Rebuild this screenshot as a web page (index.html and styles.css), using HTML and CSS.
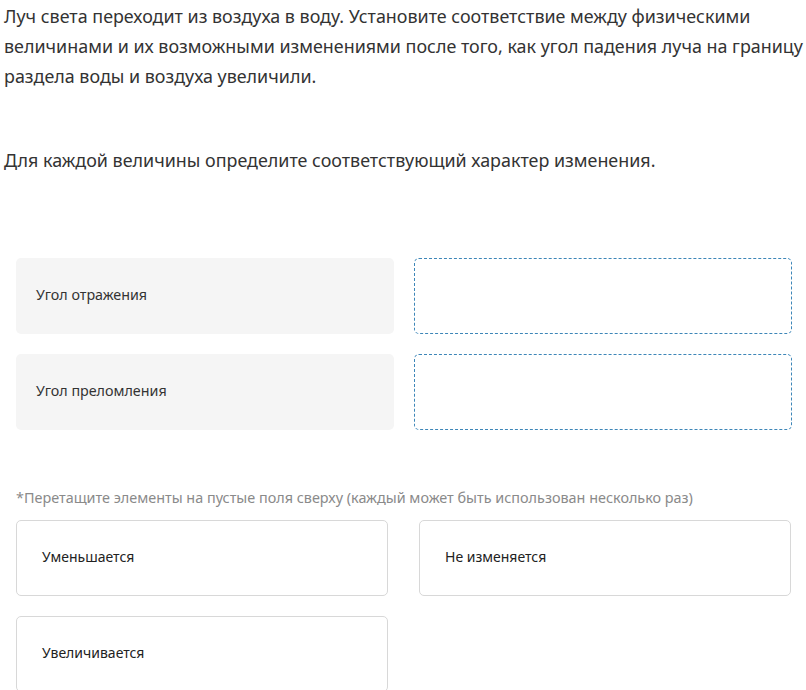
FILE: index.html
```html
<!DOCTYPE html>
<html lang="ru">
<head>
<meta charset="utf-8">
<link rel="stylesheet" href="styles.css">
</head>
<body>
<div class="page">
  <p class="question">Луч света переходит из воздуха в воду. Установите соответствие между физическими величинами и их возможными изменениями после того, как угол падения луча на границу раздела воды и воздуха увеличили.</p>
  <p class="task">Для каждой величины определите соответствующий характер изменения.</p>
  <div class="match">
    <div class="label">Угол отражения</div>
    <div class="drop"></div>
    <div class="label">Угол преломления</div>
    <div class="drop"></div>
  </div>
  <p class="hint">*Перетащите элементы на пустые поля сверху (каждый может быть использован несколько раз)</p>
  <div class="options">
    <div class="option">Уменьшается</div>
    <div class="option">Не изменяется</div>
    <div class="option">Увеличивается</div>
  </div>
</div>
</body>
</html>
```
FILE: styles.css
```css
html, body { margin: 0; padding: 0; background: #fff; }
body { font-family: "Noto Sans", "Liberation Sans", sans-serif; color: #333; }
.page { padding: 0 0 0 4px; }
.question { margin: 0; padding-top: 1px; font-size: 17.9px; line-height: 30px; }
.task { margin: 54px 0 0; font-size: 17.9px; line-height: 30px; }
.match {
  margin: 83px 10px 0 12px;
  display: grid;
  grid-template-columns: 378px 378px;
  column-gap: 20px;
  row-gap: 20px;
}
.label {
  height: 76px;
  box-sizing: border-box;
  padding: 0 0 3px 20px;
  background: #f5f5f5;
  border-radius: 5px;
  display: flex;
  align-items: center;
  font-size: 14.3px;
}
.drop {
  height: 76px;
  box-sizing: border-box;
  border: 1px dashed #3d86b8;
  border-radius: 5px;
}
.hint { margin: 58px 0 0 12px; font-size: 14.4px; color: #8a8a8a; line-height: 20px; }
.options {
  margin: 12px 0 0 12px;
  display: grid;
  grid-template-columns: 372px 372px;
  column-gap: 31px;
  row-gap: 20px;
}
.option {
  height: 76px;
  box-sizing: border-box;
  border: 1px solid #d8d8d8;
  border-radius: 5px;
  display: flex;
  align-items: center;
  padding: 0 0 3px 25px;
  font-size: 14px;
  color: #222;
}
```
